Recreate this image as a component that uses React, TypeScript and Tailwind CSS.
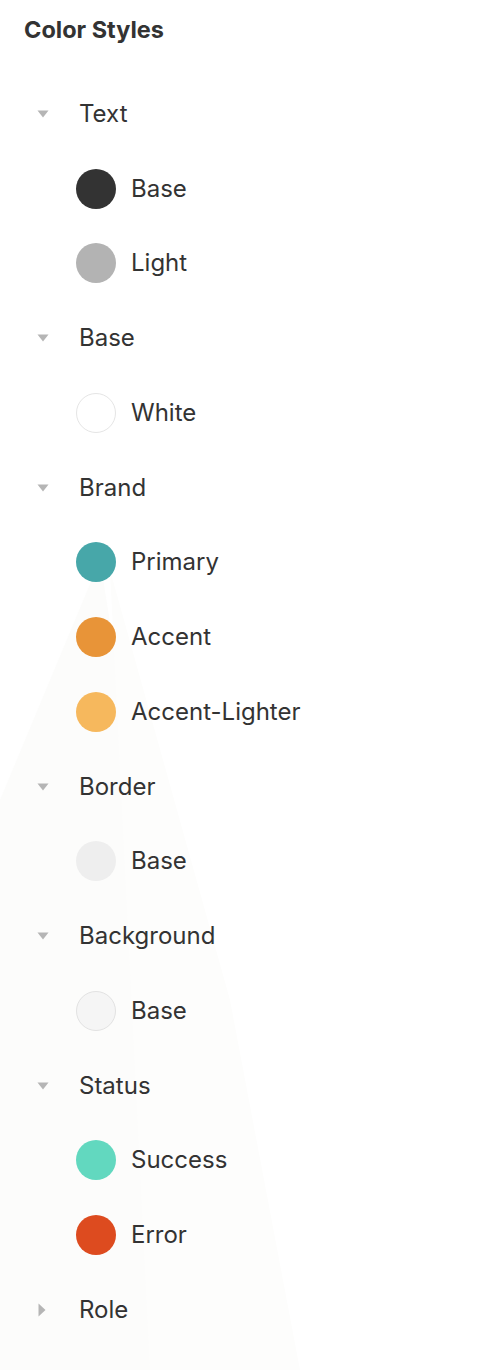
import React from "react";

type Item = { name: string; color: string; border?: string };
type Group = { name: string; open: boolean; items: Item[] };

const groups: Group[] = [
  { name: "Text", open: true, items: [
    { name: "Base", color: "#333333" },
    { name: "Light", color: "#b3b3b3" },
  ]},
  { name: "Base", open: true, items: [
    { name: "White", color: "#ffffff", border: "#e5e5e5" },
  ]},
  { name: "Brand", open: true, items: [
    { name: "Primary", color: "#47a7a9" },
    { name: "Accent", color: "#e89438" },
    { name: "Accent-Lighter", color: "#f6b85d" },
  ]},
  { name: "Border", open: true, items: [
    { name: "Base", color: "#eeeeee" },
  ]},
  { name: "Background", open: true, items: [
    { name: "Base", color: "#f5f5f5", border: "#e2e2e2" },
  ]},
  { name: "Status", open: true, items: [
    { name: "Success", color: "#62d8bf" },
    { name: "Error", color: "#dd4b1f" },
  ]},
  { name: "Role", open: false, items: [] },
];

function Caret({ open }: { open: boolean }) {
  return open ? (
    <svg width="12" height="8" viewBox="0 0 12 8" className="block">
      <polygon points="0.5,0.5 11.5,0.5 6,7.5" fill="#b5b5b5" />
    </svg>
  ) : (
    <svg width="8" height="14" viewBox="0 0 8 14" className="block">
      <polygon points="0.5,0.5 7.5,7 0.5,13.5" fill="#b5b5b5" />
    </svg>
  );
}

export default function App() {
  return (
    <div
      className="relative w-[496px] h-[1370px] bg-white overflow-hidden text-[#333333]"
      style={{ fontFamily: "Inter, 'Noto Sans', sans-serif" }}
    >
      <svg className="absolute left-0 top-0 pointer-events-none" width="496" height="1370" viewBox="0 0 496 1370">
        <polygon points="100,560 0,800 0,1370 150,1370 230,1370" fill="#fcfcfb" />
        <polygon points="110,570 230,1000 300,1370 150,1370" fill="#fdfdfc" />
      </svg>
      <div className="relative flex flex-col">
        <div className="h-[76.5px] pl-6 pt-[14px]">
          <div className="text-[23.5px] font-bold leading-[32px] text-[#333333]">Color Styles</div>
        </div>
        {groups.map((g, gi) => (
          <div key={gi} className="flex flex-col">
            <div className="h-[74.75px] flex items-center">
              <div className={g.open ? "w-[79px] pl-[37px]" : "w-[79px] pl-[38px]"}>
                <Caret open={g.open} />
              </div>
              <span className="text-[24px] leading-none">{g.name}</span>
            </div>
            {g.items.map((it, ii) => (
              <div key={ii} className="h-[74.75px] flex items-center">
                <div className="w-[76px]" />
                <div
                  className="w-[40px] h-[40px] rounded-full shrink-0"
                  style={{ backgroundColor: it.color, border: it.border ? `1.5px solid ${it.border}` : undefined }}
                />
                <span className="ml-[15px] text-[24px] leading-none">{it.name}</span>
              </div>
            ))}
          </div>
        ))}
      </div>
    </div>
  );
}
